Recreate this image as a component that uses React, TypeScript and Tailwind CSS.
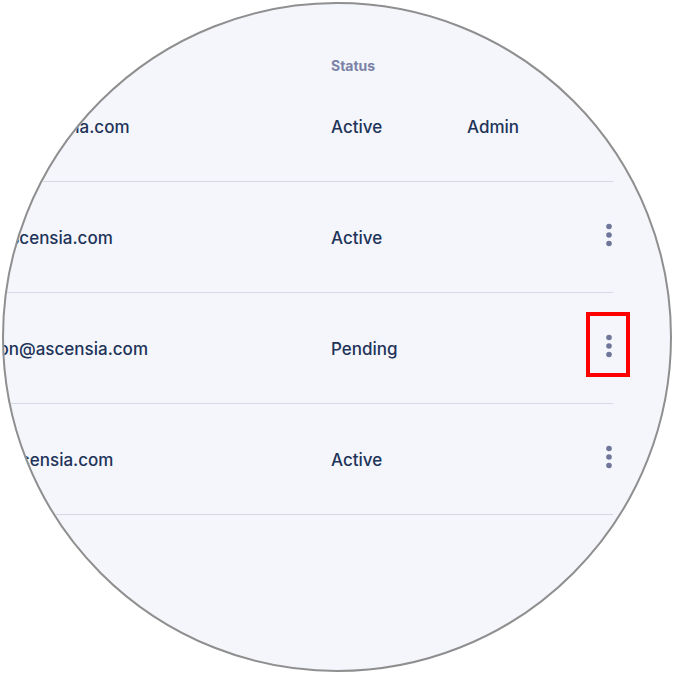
import React from "react";

function Dots() {
  return (
    <svg width="8" height="24" viewBox="0 0 8 24" className="block">
      <circle cx="4" cy="3.5" r="2.8" fill="#6f7699" />
      <circle cx="4" cy="12" r="2.8" fill="#6f7699" />
      <circle cx="4" cy="20.5" r="2.8" fill="#6f7699" />
    </svg>
  );
}

type Row = { email: string; status: string; role: string; menu: boolean; highlight?: boolean };

const rows: Row[] = [
  { email: "noah@ascensia.com", status: "Active", role: "Admin", menu: false },
  { email: "ivy@ascensia.com", status: "Active", role: "", menu: true },
  { email: "watson@ascensia.com", status: "Pending", role: "", menu: true, highlight: true },
  { email: "gia@ascensia.com", status: "Active", role: "", menu: true },
];

export default function App() {
  return (
    <div
      className="w-[674px] h-[674px] bg-white flex items-center justify-center"
      style={{ fontFamily: "Inter, 'Noto Sans', sans-serif" }}
    >
      <div className="w-[670px] h-[670px] rounded-full border-2 border-[#8f8f8f] bg-[#f5f6fc] overflow-hidden">
        <div className="ml-[-44px] w-[653px]">
          <div className="grid grid-cols-[371px_136px_106px_40px] h-[67px] pt-[52px] text-[14px] leading-[20px] font-bold text-[#7a82a6]">
            <div>Email</div>
            <div>Status</div>
            <div></div>
            <div></div>
          </div>
          {rows.map((r, i) => (
            <div
              key={i}
              className="grid grid-cols-[371px_136px_106px_40px] h-[111px] pt-[2px] border-b border-[#d6d8e5] items-center text-[17px] leading-[24px] font-medium text-[#213358]"
            >
              <div>{r.email}</div>
              <div>{r.status}</div>
              <div>{r.role}</div>
              <div className="relative h-full flex items-center justify-end">
                {r.menu && (
                  <div className="mt-[-6px]">
                    <Dots />
                  </div>
                )}
                {r.highlight && (
                  <div className="absolute left-[13px] top-[17px] w-[44px] h-[65px] border-[4px] border-[#ff0000]" />
                )}
              </div>
            </div>
          ))}
        </div>
      </div>
    </div>
  );
}
